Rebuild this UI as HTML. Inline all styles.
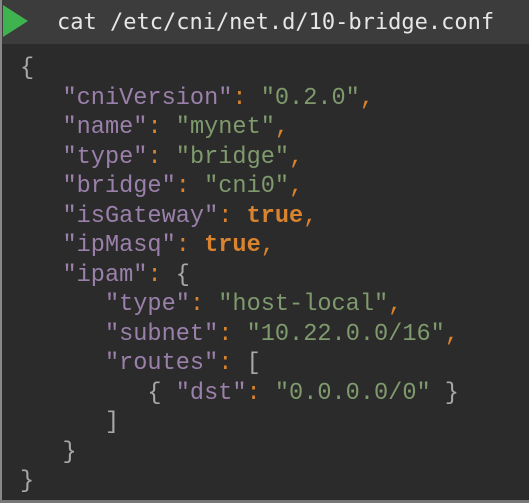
<!DOCTYPE html>
<html><head><style>
html,body{margin:0;padding:0;width:529px;height:503px;overflow:hidden;background:#2b2b2b;}
.hdr{position:absolute;left:0;top:0;width:529px;height:44px;background:#3c3c3c;}
.tri{position:absolute;left:3px;top:5px;width:0;height:0;border-top:16px solid transparent;border-bottom:16px solid transparent;border-left:25px solid #3fb34f;}
.cmd{position:absolute;left:57px;top:6px;font:22px "DejaVu Sans Mono",monospace;color:#e6e6e6;line-height:34px;white-space:pre;}
.lb{position:absolute;left:0;top:0;width:2px;height:503px;background:#888;}
.bb{position:absolute;left:0;top:500px;width:529px;height:3px;background:#777;}
pre{position:absolute;left:20px;top:54px;margin:0;font:23.6px "Liberation Mono",monospace;line-height:29.5px;color:#a8a8a8;}
.k{color:#9a80aa}.s{color:#7f9a6c}.p{color:#d9832e}.t{color:#d9832e;font-weight:bold}
</style></head><body>
<div class="hdr"><div class="tri"></div><div class="cmd">cat /etc/cni/net.d/10-bridge.conf</div></div>
<pre>{
   <span class="k">"cniVersion"</span><span class="p">:</span> <span class="s">"0.2.0"</span><span class="p">,</span>
   <span class="k">"name"</span><span class="p">:</span> <span class="s">"mynet"</span><span class="p">,</span>
   <span class="k">"type"</span><span class="p">:</span> <span class="s">"bridge"</span><span class="p">,</span>
   <span class="k">"bridge"</span><span class="p">:</span> <span class="s">"cni0"</span><span class="p">,</span>
   <span class="k">"isGateway"</span><span class="p">:</span> <span class="t">true</span><span class="p">,</span>
   <span class="k">"ipMasq"</span><span class="p">:</span> <span class="t">true</span><span class="p">,</span>
   <span class="k">"ipam"</span><span class="p">:</span> {
      <span class="k">"type"</span><span class="p">:</span> <span class="s">"host-local"</span><span class="p">,</span>
      <span class="k">"subnet"</span><span class="p">:</span> <span class="s">"10.22.0.0/16"</span><span class="p">,</span>
      <span class="k">"routes"</span><span class="p">:</span> [
         { <span class="k">"dst"</span><span class="p">:</span> <span class="s">"0.0.0.0/0"</span> }
      ]
   }
}</pre>
<div class="lb"></div><div class="bb"></div>
</body></html>
